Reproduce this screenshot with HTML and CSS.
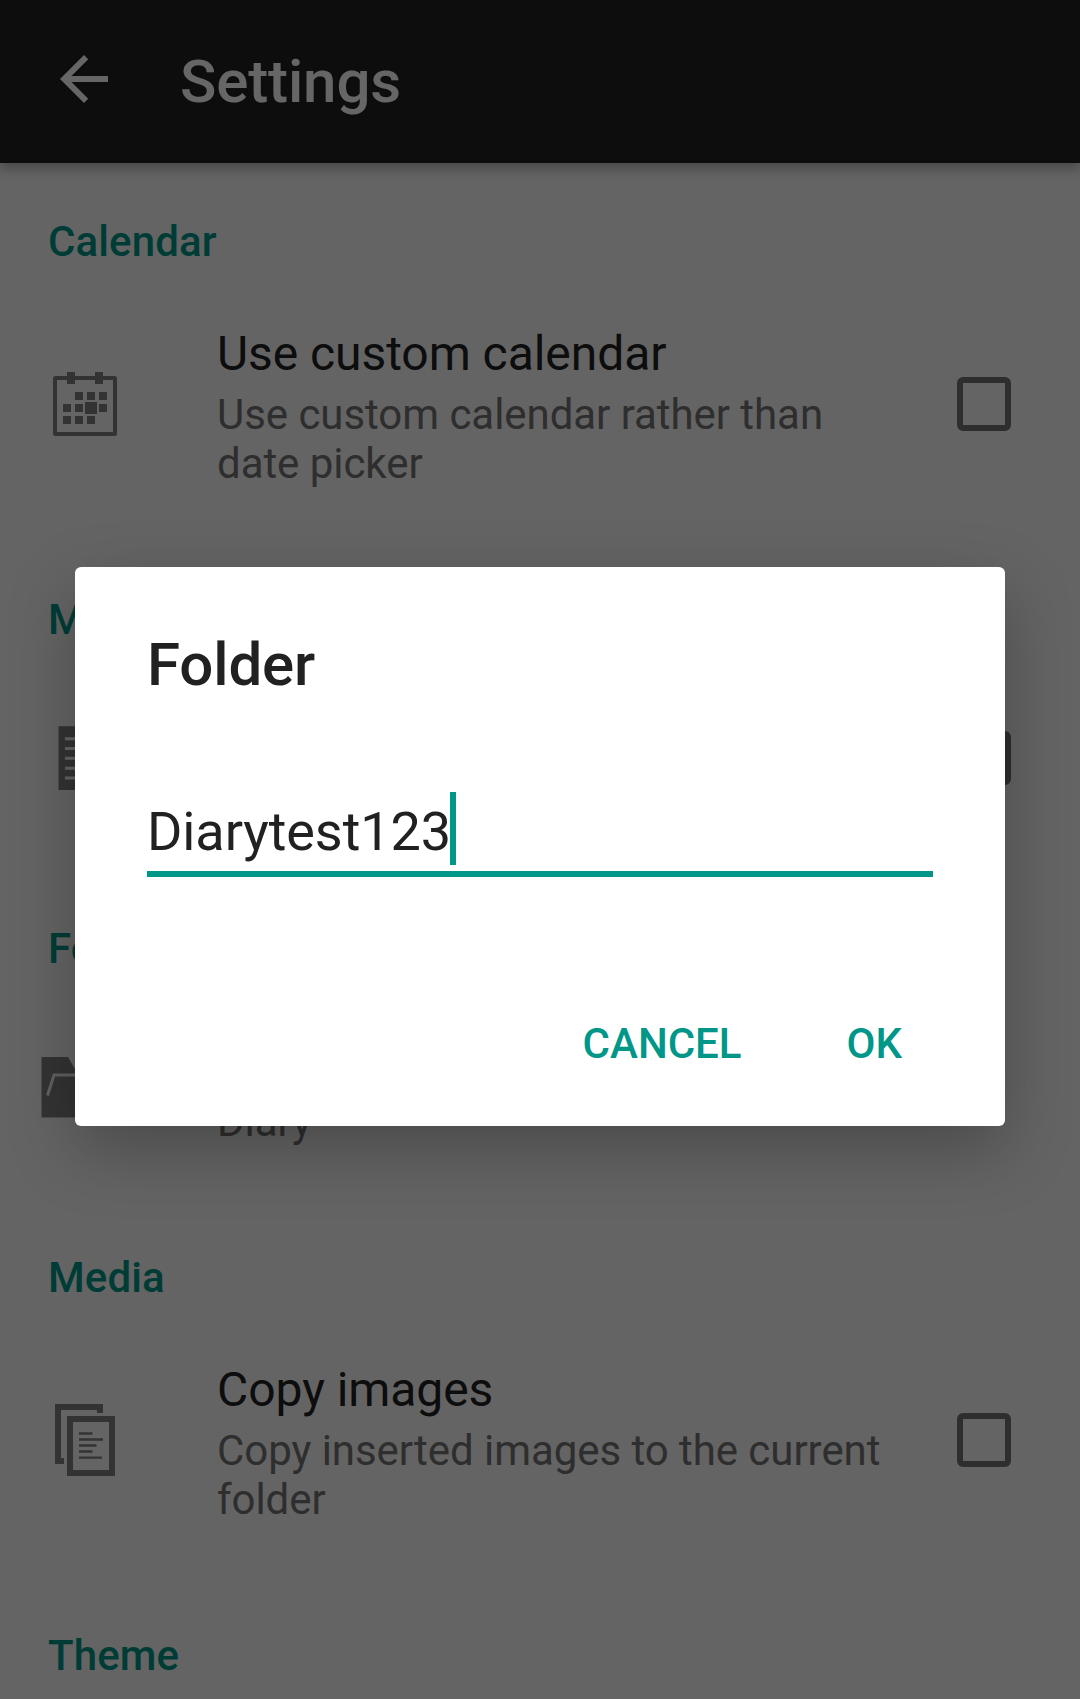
FILE: index.html
```html
<!DOCTYPE html>
<html lang="en">
<head>
<meta charset="utf-8">
<title>Settings</title>
<link rel="stylesheet" href="styles.css">
</head>
<body>
<div class="screen">
  <header class="toolbar">
    <svg class="back" viewBox="0 0 24 24"><path d="M20 11H7.83l5.59-5.59L12 4l-8 8 8 8 1.41-1.41L7.83 13H20z"/></svg>
    <h1 class="toolbar-title">Settings</h1>
  </header>
  <main class="list">
    <h2 class="category category-first">Calendar</h2>
    <section class="item">
      <svg class="icon" viewBox="0 0 96 96">
        <rect x="18" y="22" width="60" height="56" rx=".5" fill="none" stroke="#808080" stroke-width="4"/>
        <path d="M30 16h8v12h-8zM58 16h8v12h-8zM38 36h8v8h-8zM50 36h8v8h-8zM62 36h8v8h-8zM26 48h8v8h-8zM38 48h8v8h-8zM48 46h12v12H48zM62 48h8v8h-8zM26 60h8v8h-8zM38 60h8v8h-8zM50 60h8v8h-8z"/>
      </svg>
      <div class="text">
        <div class="title">Use custom calendar</div>
        <div class="summary">Use custom calendar rather than date picker</div>
      </div>
      <span class="checkbox"></span>
    </section>
    <h2 class="category">Markdown</h2>
    <section class="item item-short">
      <svg class="icon" viewBox="0 0 96 96">
        <path fill-rule="evenodd" d="M21.5 16.3h53V80h-53zM28 27.3v3h40v-3zM28 37v3h40v-3zM28 46.7v3h40v-3zM28 56.7v3h40v-3zM28 66.5v3h40v-3z"/>
      </svg>
      <div class="text"></div>
      <span class="checkbox"></span>
    </section>
    <h2 class="category">Folder</h2>
    <section class="item item-short">
      <svg class="icon" viewBox="0 0 96 96">
        <path d="M4.5 18H31l7 12h42v48.5H4.5z"/>
        <path d="M10.5 56.5l6.5-20.5h60" fill="none" stroke="#f0f0f0" stroke-width="3"/>
      </svg>
      <div class="text text-single">
        <div class="summary">Diary</div>
      </div>
    </section>
    <h2 class="category">Media</h2>
    <section class="item">
      <svg class="icon" viewBox="0 0 96 96">
        <path d="M18 12h48v9h-6v-3H24v48h3v6h-9z"/>
        <path fill-rule="evenodd" d="M30 24h48v60H30zM36 30v48h36V30z"/>
        <path d="M42 41.5h13.5M42 47.5h24M42 53.5h17.5M42 59.5h13.5M42 65.7h23" stroke="#808080" stroke-width="2.3"/>
      </svg>
      <div class="text">
        <div class="title">Copy images</div>
        <div class="summary">Copy inserted images to the current folder</div>
      </div>
      <span class="checkbox"></span>
    </section>
    <h2 class="category">Theme</h2>
  </main>
  <div class="scrim">
    <div class="dialog" role="dialog">
      <h2 class="dialog-title">Folder</h2>
      <div class="field"><span class="value">Diarytest123</span><span class="caret"></span></div>
      <div class="actions">
        <button class="action">CANCEL</button>
        <button class="action">OK</button>
      </div>
    </div>
  </div>
</div>
</body>
</html>
```
FILE: styles.css
```css
* { box-sizing: border-box; }
body, h1, h2 { margin: 0; }
body { font-family: Roboto, sans-serif; background: #fafafa; }

.screen {
  position: relative;
  width: 1080px;
  height: 1699px;
  overflow: hidden;
}

.toolbar {
  position: relative;
  display: flex;
  align-items: flex-start;
  height: 163px;
  padding: 43px 48px 0;
  gap: 60px;
  background: #212121;
  box-shadow: 0 6px 12px rgba(0, 0, 0, .28);
}
.back { width: 72px; height: 72px; fill: #fff; }
.toolbar-title {
  padding-top: 4px;
  font-size: 60px;
  font-weight: 500;
  line-height: 70px;
  letter-spacing: -.12px;
  color: #fff;
}

.category {
  height: 128px;
  padding: 66px 48px 0;
  font-size: 42px;
  font-weight: 500;
  line-height: 49px;
  letter-spacing: .1px;
  color: #009688;
}
.category-first { height: 116px; padding-top: 54px; }

.item { display: flex; align-items: center; height: 250px; padding: 0 69px 0 37px; }
.item-short { height: 201px; }
.icon { flex: none; width: 96px; height: 96px; fill: #808080; }
.text { flex: 1; align-self: flex-start; margin-left: 84px; padding: 47px 56px 0 0; }
.text-single { padding-top: 111px; }
.title { margin-bottom: 8px; font-size: 48px; line-height: 56px; letter-spacing: -.06px; color: #212121; }
.summary { font-size: 42px; line-height: 49px; letter-spacing: -.05px; color: #737373; }
.checkbox { flex: none; width: 54px; height: 54px; border: 6px solid #737373; border-radius: 6px; }

.scrim {
  position: absolute;
  inset: 0;
  padding: 567px 75px 0;
  background: rgba(0, 0, 0, .6);
}
.dialog {
  height: 559px;
  padding: 63px 72px 0;
  border-radius: 6px;
  background: #fff;
  box-shadow: 0 24px 66px rgba(0, 0, 0, .26);
}
.dialog-title { font-size: 60px; font-weight: 500; line-height: 70px; letter-spacing: -.12px; color: #212121; }
.field {
  display: flex;
  height: 85px;
  margin-top: 92px;
  border-bottom: 6px solid #009688;
}
.value { padding-top: 8px; font-size: 54px; line-height: 63px; letter-spacing: -.1px; color: #212121; }
.caret { width: 6px; height: 73px; margin-left: -1px; background: #009688; }
.actions { display: flex; justify-content: flex-end; gap: 105px; margin-top: 142px; padding-right: 31px; }
.action {
  padding: 0;
  border: 0;
  background: none;
  font: 500 42px/49px Roboto, sans-serif;
  color: #009688;
}
```
